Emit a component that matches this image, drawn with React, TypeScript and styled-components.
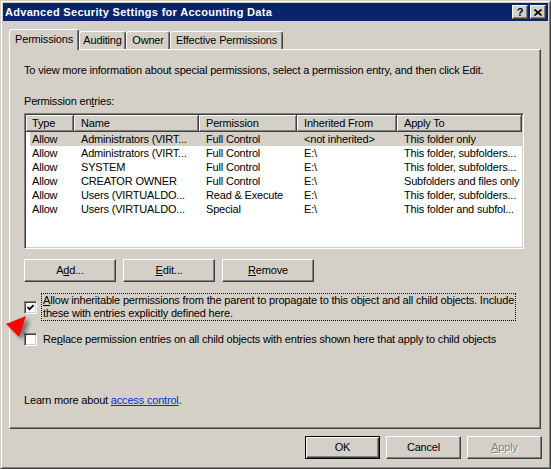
import React from "react";
import styled, { createGlobalStyle } from "styled-components";

const GlobalStyle = createGlobalStyle`
  html, body {
    margin: 0;
    padding: 0;
    background: #d4d0c8;
  }
  body {
    font-family: "Liberation Sans", Arial, sans-serif;
    font-size: 11px;
    line-height: 13px;
    letter-spacing: -0.18px;
    color: #000;
  }
`;

const columns = [
  { title: "Type", width: 48 },
  { title: "Name", width: 125 },
  { title: "Permission", width: 98 },
  { title: "Inherited From", width: 100 },
  { title: "Apply To", width: 125 },
];

const entries = [
  ["Allow", "Administrators (VIRT...", "Full Control", "<not inherited>", "This folder only"],
  ["Allow", "Administrators (VIRT...", "Full Control", "E:\\", "This folder, subfolders..."],
  ["Allow", "SYSTEM", "Full Control", "E:\\", "This folder, subfolders..."],
  ["Allow", "CREATOR OWNER", "Full Control", "E:\\", "Subfolders and files only"],
  ["Allow", "Users (VIRTUALDO...", "Read & Execute", "E:\\", "This folder, subfolders..."],
  ["Allow", "Users (VIRTUALDO...", "Special", "E:\\", "This folder and subfol..."],
];

export default function App() {
  return (
    <>
      <GlobalStyle />
      <Window>
        <TitleBar>
          <TitleText>Advanced Security Settings for Accounting Data</TitleText>
          <TitleButtons>
            <CaptionButton>?</CaptionButton>
            <CaptionButton>
              <svg width="8" height="7" viewBox="0 0 8 7">
                <path d="M0.5 0.5 L7.5 6.5 M7.5 0.5 L0.5 6.5" stroke="#000" strokeWidth="1.6" />
              </svg>
            </CaptionButton>
          </TitleButtons>
        </TitleBar>

        <Body>
          <TabRow>
            <Tab $active $w={70}>Permissions</Tab>
            <Tab $w={47}>Auditing</Tab>
            <Tab $w={44}>Owner</Tab>
            <Tab $w={113}>Effective Permissions</Tab>
          </TabRow>

          <Panel>
            <Intro>
              To view more information about special permissions, select a permission entry, and then click Edit.
            </Intro>
            <Label>
              Permission en<u>t</u>ries:
            </Label>

            <ListView>
              <HeaderRow>
                {columns.map((c) => (
                  <HeaderCell key={c.title} $w={c.width}>
                    {c.title}
                  </HeaderCell>
                ))}
              </HeaderRow>
              {entries.map((row, i) => (
                <Row key={i} $selected={i === 0}>
                  {row.map((cell, j) => (
                    <Cell key={j} $w={columns[j].width}>
                      {cell}
                    </Cell>
                  ))}
                </Row>
              ))}
            </ListView>

            <ActionRow>
              <Button $w={92}>
                A<u>d</u>d...
              </Button>
              <Button $w={92}>
                <u>E</u>dit...
              </Button>
              <Button $w={92}>
                <u>R</u>emove
              </Button>
            </ActionRow>

            <CheckRow>
              <CheckBox>
                <svg width="7" height="7" viewBox="0 0 7 7">
                  <path d="M0.6 3 L2.6 5.2 L6.6 1" stroke="#000" strokeWidth="1.8" fill="none" />
                </svg>
              </CheckBox>
              <FocusLabel>
                <u>A</u>llow inheritable permissions from the parent to propagate to this object and all child objects. Include
                <br />
                these with entries explicitly defined here.
              </FocusLabel>
            </CheckRow>

            <CheckRow $gap={12}>
              <CheckBox />
              <PlainLabel>
                Re<u>p</u>lace permission entries on all child objects with entries shown here that apply to child objects
              </PlainLabel>
            </CheckRow>

            <LearnMore>
              Learn more about <Link>access control</Link>.
            </LearnMore>
          </Panel>

          <DialogButtons>
            <Button $w={75} $default>
              OK
            </Button>
            <Button $w={75}>Cancel</Button>
            <Button $w={75} $disabled>
              <u>A</u>pply
            </Button>
          </DialogButtons>
        </Body>

        <Pointer width="40" height="36" viewBox="0 0 40 36">
          <defs>
            <filter id="soft" x="-50%" y="-50%" width="200%" height="200%">
              <feGaussianBlur stdDeviation="2" />
            </filter>
          </defs>
          <polygon points="9,16 29,8 22,29" fill="#000" opacity="0.45" filter="url(#soft)" />
          <polygon points="5,13 25,5 18,26" fill="#ff0000" />
        </Pointer>
      </Window>
    </>
  );
}

const Window = styled.div`
  position: relative;
  box-sizing: border-box;
  width: 551px;
  height: 469px;
  padding: 2px;
  background: #d4d0c8;
  border: 1px solid;
  border-color: #d4d0c8 #404040 #404040 #d4d0c8;
  box-shadow: inset 1px 1px #fff, inset -1px -1px #808080;
  display: flex;
  flex-direction: column;
`;

const TitleBar = styled.div`
  height: 18px;
  flex: none;
  background: #0a246a;
  display: flex;
  align-items: center;
  padding: 0 2px 0 2px;
`;

const TitleText = styled.div`
  color: #fff;
  font-weight: bold;
  font-size: 11px;
  letter-spacing: 0.3px;
  white-space: nowrap;
`;

const TitleButtons = styled.div`
  margin-left: auto;
  display: flex;
  gap: 2px;
`;

const CaptionButton = styled.div`
  box-sizing: border-box;
  width: 16px;
  height: 14px;
  background: #d4d0c8;
  border: 1px solid;
  border-color: #fff #404040 #404040 #fff;
  box-shadow: inset -1px -1px #808080;
  display: flex;
  align-items: center;
  justify-content: center;
  font-weight: bold;
  font-size: 11px;
  line-height: 11px;
  letter-spacing: 0;
  color: #000;
`;

const Body = styled.div`
  flex: 1;
  display: flex;
  flex-direction: column;
  padding: 8px 6px 0 6px;
`;

const TabRow = styled.div`
  display: flex;
  align-items: flex-end;
  height: 20px;
  position: relative;
  z-index: 1;
`;

const Tab = styled.div<{ $active?: boolean; $w: number }>`
  box-sizing: border-box;
  width: ${({ $w }) => $w}px;
  height: ${({ $active }) => ($active ? 21 : 18)}px;
  margin-bottom: ${({ $active }) => ($active ? -1 : 0)}px;
  padding-top: ${({ $active }) => ($active ? 3 : 2)}px;
  background: #d4d0c8;
  border: 1px solid;
  border-bottom: none;
  border-color: #fff #404040 transparent #fff;
  border-radius: 3px 3px 0 0;
  box-shadow: inset -1px 0 #808080;
  text-align: center;
  white-space: nowrap;
`;

const Panel = styled.div`
  box-sizing: border-box;
  width: 532px;
  height: 380px;
  padding: 14px 14px 0 14px;
  border: 1px solid;
  border-color: #fff #404040 #404040 #fff;
  box-shadow: inset -1px -1px #808080;
  display: flex;
  flex-direction: column;
`;

const Intro = styled.div`
  white-space: nowrap;
`;

const Label = styled.div`
  margin-top: 18px;
`;

const ListView = styled.div`
  box-sizing: border-box;
  margin-top: 5px;
  width: 500px;
  height: 136px;
  padding: 1px;
  background: #fff;
  border: 1px solid;
  border-color: #808080 #fff #fff #808080;
  box-shadow: inset 1px 1px #404040, inset -1px -1px #d4d0c8;
`;

const HeaderRow = styled.div`
  display: flex;
  height: 17px;
`;

const HeaderCell = styled.div<{ $w: number }>`
  box-sizing: border-box;
  width: ${({ $w }) => $w}px;
  height: 17px;
  padding: 2px 0 0 7px;
  background: #d4d0c8;
  border-right: 1px solid #404040;
  border-bottom: 1px solid #404040;
  box-shadow: inset 1px 1px #fff, inset -1px -1px #808080;
  white-space: nowrap;
  &:first-child {
    padding-left: 6px;
  }
`;

const Row = styled.div<{ $selected?: boolean }>`
  display: flex;
  height: 14px;
  align-items: center;
  background: ${({ $selected }) =>
    $selected ? "linear-gradient(to right, transparent 4px, #d4d0c8 4px)" : "transparent"};
`;

const Cell = styled.div<{ $w: number }>`
  box-sizing: border-box;
  width: ${({ $w }) => $w}px;
  padding-left: 7px;
  white-space: nowrap;
  overflow: hidden;
  &:first-child {
    padding-left: 6px;
  }
`;

const ActionRow = styled.div`
  display: flex;
  gap: 7px;
  margin-top: 10px;
`;

const Button = styled.div<{ $w: number; $default?: boolean; $disabled?: boolean }>`
  box-sizing: border-box;
  width: ${({ $w }) => $w}px;
  height: 23px;
  display: flex;
  align-items: center;
  justify-content: center;
  background: #d4d0c8;
  border: 1px solid;
  border-color: ${({ $default }) => ($default ? "#000" : "#fff #404040 #404040 #fff")};
  box-shadow: ${({ $default }) =>
    $default
      ? "inset 1px 1px #fff, inset -1px -1px #404040, inset -2px -2px #808080"
      : "inset -1px -1px #808080"};
  color: ${({ $disabled }) => ($disabled ? "#808080" : "#000")};
  text-shadow: ${({ $disabled }) => ($disabled ? "1px 1px #fff" : "none")};
  white-space: nowrap;
`;

const CheckRow = styled.div<{ $gap?: number }>`
  display: flex;
  align-items: center;
  gap: 4px;
  margin-top: ${({ $gap }) => $gap ?? 11}px;
`;

const CheckBox = styled.div`
  box-sizing: border-box;
  flex: none;
  width: 13px;
  height: 13px;
  background: #fff;
  border: 1px solid;
  border-color: #808080 #fff #fff #808080;
  box-shadow: inset 1px 1px #404040, inset -1px -1px #d4d0c8;
  display: flex;
  align-items: center;
  justify-content: center;
`;

const FocusLabel = styled.div`
  box-sizing: border-box;
  width: 475px;
  padding: 0 0 0 1px;
  border: 1px dotted #000;
  white-space: nowrap;
`;

const PlainLabel = styled.div`
  padding-left: 2px;
  white-space: nowrap;
`;

const LearnMore = styled.div`
  margin-top: 48px;
`;

const Link = styled.span`
  color: #0033cc;
  text-decoration: underline;
`;

const DialogButtons = styled.div`
  display: flex;
  justify-content: flex-end;
  gap: 6px;
  margin-top: 7px;
`;

const Pointer = styled.svg`
  position: absolute;
  left: 0;
  top: 310px;
  overflow: visible;
`;
